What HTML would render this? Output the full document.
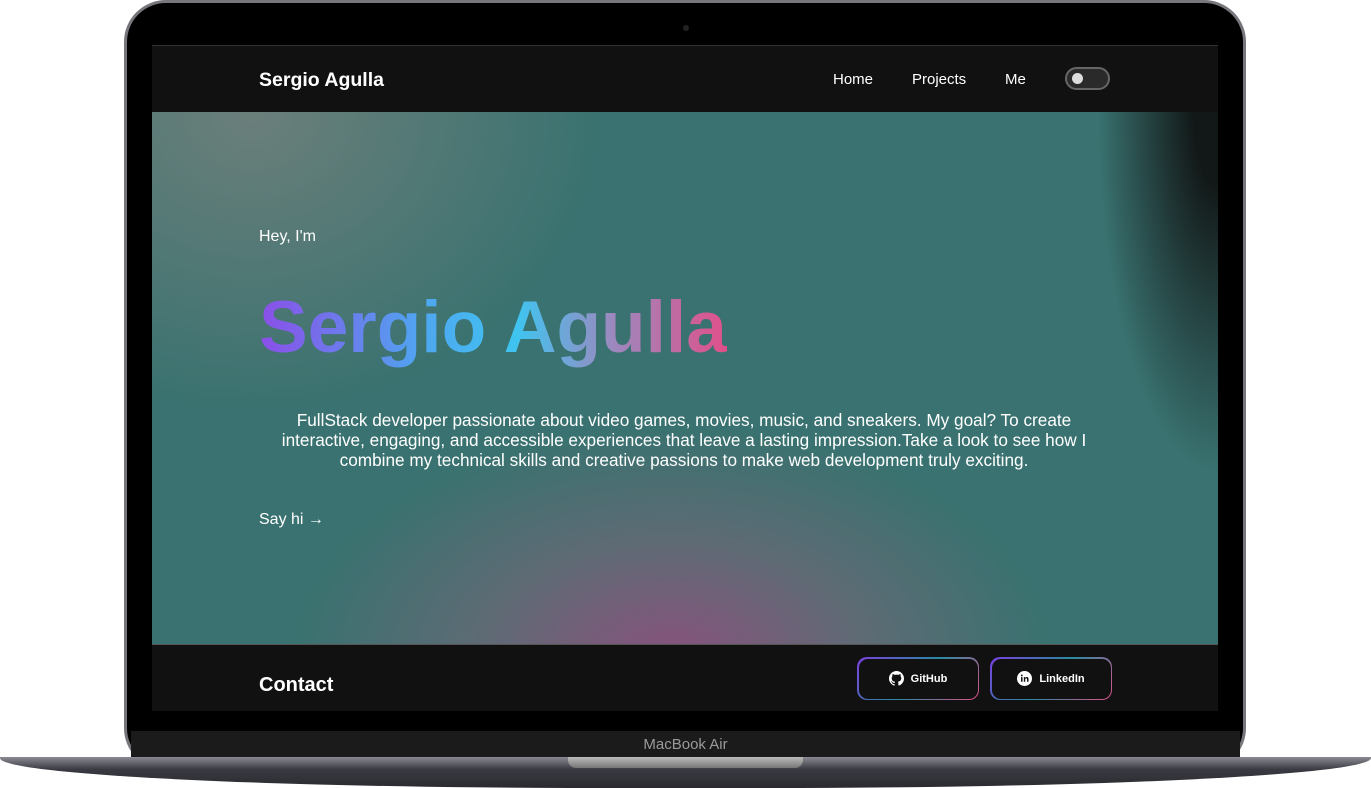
<!DOCTYPE html>
<html><head><style>
*{margin:0;padding:0;box-sizing:border-box}
body{width:1371px;height:788px;background:#fff;position:relative;overflow:hidden;font-family:"Liberation Sans",sans-serif}
.bezel{position:absolute;left:124px;top:0;width:1122px;height:770px;background:#000;border-radius:42px;border:3px solid #76767c}
.screen{position:absolute;left:152px;top:45px;width:1066px;height:666px;background:#111}
.cam{position:absolute;left:683px;top:25px;width:6px;height:6px;border-radius:50%;background:#222}
.nav{position:absolute;left:0;top:0;width:1066px;height:67px;background:#111;border-top:1px solid #333}
.logo{position:absolute;left:107px;top:23px;color:#fff;font-weight:bold;font-size:19.5px}
.links{position:absolute;top:25px;color:#fff;font-size:15px}
.tog{position:absolute;left:913px;top:21px;width:45px;height:23px;border:2px solid #666;border-radius:12px;background:#2a2a2a}
.tog i{position:absolute;left:5px;top:4px;width:11px;height:11px;border-radius:50%;background:#ddd}
.hero{position:absolute;left:0;top:67px;width:1066px;height:533px;background:
radial-gradient(ellipse 380px 230px at 520px 545px,rgba(140,80,125,.95),rgba(125,100,120,.55) 50%,transparent 100%),
radial-gradient(ellipse 350px 300px at 100px 0px,rgba(120,130,125,.8),transparent),
radial-gradient(ellipse 120px 360px at 1066px 0px,rgba(14,14,14,.9) 20%,transparent 100%),
#397270;border-bottom:1px solid #555}
.hey{position:absolute;left:107px;top:116px;color:#fff;font-size:16px}
.name{position:absolute;left:107px;top:174px;font-size:73px;font-weight:bold;background:linear-gradient(90deg,#8b4ee8,#4fa6f0 35%,#3fc4f0 55%,#9a8ac0 75%,#e0508a);-webkit-background-clip:text;color:transparent}
.desc{position:absolute;left:112px;top:298px;width:840px;text-align:center;color:#fff;font-size:17.2px;line-height:20px}
.say{position:absolute;left:107px;top:399px;color:#fff;font-size:16px}
.contact{position:absolute;left:107px;top:629px;color:#fff;font-weight:bold;font-size:20px}
.btn{position:absolute;top:612px;width:122px;height:43px;border-radius:10px;padding:1.5px;background:linear-gradient(135deg,#7b3fe0,#2a8aa0 50%,#e0508a)}
.btn div{width:100%;height:100%;background:#111;border-radius:9px;color:#fff;font-size:11px;font-weight:bold;display:flex;align-items:center;justify-content:center;gap:7px}
.chin{position:absolute;left:131px;top:731px;width:1109px;height:28px;background:#1b1b1b;color:#9a9a9a;font-size:15px;text-align:center;line-height:28px}
.base{position:absolute;left:0;top:757px;width:1371px;height:31px;background:linear-gradient(#8a8a92,#3a3a42 40%,#2a2a30);border-radius:0 0 600px 600px/0 0 30px 30px}
.notch{position:absolute;left:568px;top:757px;width:235px;height:11px;background:linear-gradient(#bbb,#777);border-radius:0 0 8px 8px}
</style></head><body>
<div class="bezel"></div>
<div class="cam"></div>
<div class="screen">
<div class="nav"><div class="logo">Sergio Agulla</div>
<div class="links" style="left:681px">Home</div><div class="links" style="left:760px">Projects</div><div class="links" style="left:853px">Me</div>
<div class="tog"><i></i></div></div>
<div class="hero">
<div class="hey">Hey, I'm</div>
<div class="name">Sergio Agulla</div>
<div class="desc">FullStack developer passionate about video games, movies, music, and sneakers. My goal? To create interactive, engaging, and accessible experiences that leave a lasting impression.Take a look to see how I combine my technical skills and creative passions to make web development truly exciting.</div>
<div class="say">Say hi →</div>
</div>
<div class="contact">Contact</div>
<div class="btn" style="left:705px"><div><svg width="15" height="15" viewBox="0 0 16 16"><path fill="#fff" d="M8 0C3.6 0 0 3.6 0 8c0 3.5 2.3 6.5 5.5 7.6.4.1.5-.2.5-.4v-1.4c-2.2.5-2.7-1-2.7-1-.4-.9-.9-1.2-.9-1.2-.7-.5.1-.5.1-.5.8.1 1.2.8 1.2.8.7 1.2 1.9.9 2.3.7.1-.5.3-.9.5-1.1-1.8-.2-3.6-.9-3.6-4 0-.9.3-1.6.8-2.1-.1-.2-.4-1 .1-2.1 0 0 .7-.2 2.2.8.6-.2 1.3-.3 2-.3s1.4.1 2 .3c1.5-1 2.2-.8 2.2-.8.4 1.1.2 1.9.1 2.1.5.6.8 1.3.8 2.1 0 3.1-1.9 3.7-3.6 3.9.3.3.5.8.5 1.5v2.2c0 .2.1.5.6.4C13.7 14.5 16 11.5 16 8c0-4.4-3.6-8-8-8z"/></svg>GitHub</div></div>
<div class="btn" style="left:838px"><div><svg width="15" height="15" viewBox="0 0 16 16"><circle cx="8" cy="8" r="8" fill="#fff"/><rect x="4.3" y="6.5" width="1.6" height="5" fill="#111"/><circle cx="5.1" cy="4.7" r="1" fill="#111"/><path d="M7.3 6.5h1.5v.8c.4-.6 1-.9 1.7-.9 1.3 0 1.8.8 1.8 2.2v2.9h-1.6V8.9c0-.7-.2-1.2-.9-1.2s-1 .5-1 1.2v2.6H7.3z" fill="#111"/></svg>LinkedIn</div></div>
</div>
<div class="chin">MacBook Air</div>
<div class="base"></div>
<div class="notch"></div>
</body></html>
